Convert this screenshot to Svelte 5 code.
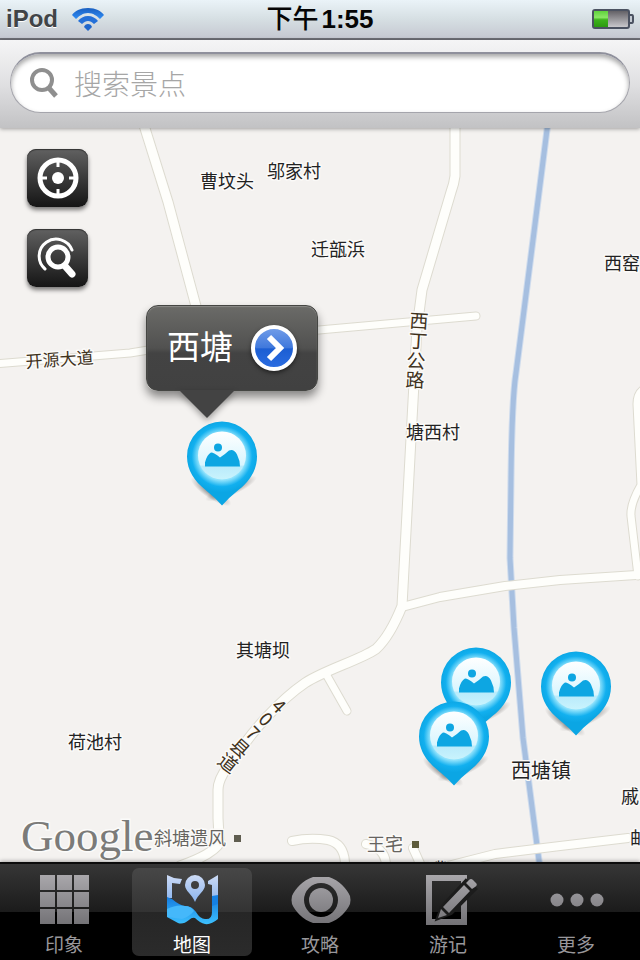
<script>
  const roads = [
    { d: 'M143 -6 L168 74 L197 182', w: 9 },
    { d: 'M-6 236 L130 225 L210 212 L330 201 L476 188', w: 7 },
    { d: 'M455 -6 V48 Q454 56 451 64 L422 162 L417 200 L411 310 L402 478 Q390 508 376 521 C360 532 325 542 305 555 C280 572 250 605 235 630 C224 642 218 652 218 662 V690 Q219 710 220 714 Q214 726 180 738', w: 9 },
    { d: 'M402 479 L440 469 L505 458 L560 452 L650 446', w: 8 },
    { d: 'M326 546 L347 583', w: 7 },
    { d: 'M650 258 Q637 262 637 276 L641 357 Q630 376 631 388 L638 448', w: 7 },
    { d: 'M292 713 Q310 709 328 712 Q346 716 345 740', w: 8 },
    { d: 'M366 716 Q387 720 386 740', w: 8 },
    { d: 'M413 720 L422 740', w: 8 },
    { d: 'M440 740 L495 726 L560 718 L628 710', w: 8 }
  ];

  const places = [
    { name: '曹坟头', x: 200, y: 60 },
    { name: '邬家村', x: 267, y: 50 },
    { name: '迁瓿浜', x: 311, y: 128 },
    { name: '西窑', x: 604, y: 142 },
    { name: '塘西村', x: 406, y: 311 },
    { name: '其塘坝', x: 236, y: 529 },
    { name: '荷池村', x: 68, y: 621 },
    { name: '西塘镇', x: 511, y: 650, size: 'town' },
    { name: '戚', x: 621, y: 675 },
    { name: '邮', x: 630, y: 717 },
    { name: '嘴', x: 429, y: 748 },
    { name: '斜塘遗风', x: 154, y: 717, size: 'poi' },
    { name: '王宅', x: 367, y: 723, size: 'poi' }
  ];

  const roadChars = [
    { c: '西', x: 419, y: 193, r: 4 },
    { c: '丁', x: 418, y: 213, r: 4 },
    { c: '公', x: 416, y: 233, r: 4 },
    { c: '路', x: 415, y: 252, r: 2 },
    { c: '4', x: 279, y: 578, r: 45 },
    { c: '0', x: 266, y: 591, r: 45 },
    { c: '7', x: 253, y: 605, r: 45 },
    { c: '县', x: 240, y: 620, r: 42 },
    { c: '道', x: 228, y: 635, r: 38 }
  ];

  const pins = [
    { name: '西塘', x: 222, y: 378 },
    { name: '景点一', x: 476, y: 604 },
    { name: '景点二', x: 576, y: 608 },
    { name: '景点三', x: 454, y: 658 }
  ];

  const tabs = [
    { id: 'grid', label: '印象' },
    { id: 'map', label: '地图' },
    { id: 'eye', label: '攻略' },
    { id: 'note', label: '游记' },
    { id: 'more', label: '更多' }
  ];

  let active = $state('map');
  let query = $state('');
</script>

<div class="app">
  <header class="status">
    <div class="carrier">
      <span>iPod</span>
      <svg width="34" height="24" viewBox="0 0 34 24" aria-hidden="true">
        <defs>
          <linearGradient id="wifi" x1="0" y1="0" x2="0" y2="1">
            <stop offset="0" stop-color="#1a5fc0" />
            <stop offset="1" stop-color="#2f8df5" />
          </linearGradient>
        </defs>
        <path fill="url(#wifi)" d="M17 1 C25 1 30 4 33 8 L29 12 C26 9 22 6 17 6 C12 6 8 9 5 12 L1 8 C4 4 9 1 17 1Z" />
        <path fill="#2470d8" d="M17 9 C21 9 25 11 27 14 L23 17 C21 15 19 14 17 14 C15 14 13 15 11 17 L7 14 C9 11 13 9 17 9Z" />
        <path fill="#1f66cc" d="M17 17 Q20 17 21 20 L17 24 L13 20 Q14 17 17 17Z" />
      </svg>
    </div>
    <div class="time"><span class="ampm">下午</span>1:55</div>
    <div class="power">
      <svg width="42" height="20" viewBox="0 0 42 20" aria-label="电量">
        <defs>
          <linearGradient id="cell" x1="0" y1="0" x2="0" y2="1">
            <stop offset="0" stop-color="#5d5b60" />
            <stop offset="1" stop-color="#cfced2" />
          </linearGradient>
          <linearGradient id="charge" x1="0" y1="0" x2="0" y2="1">
            <stop offset="0" stop-color="#5fd23c" />
            <stop offset="0.4" stop-color="#8be765" />
            <stop offset="0.55" stop-color="#3cb31b" />
            <stop offset="1" stop-color="#2c9a10" />
          </linearGradient>
        </defs>
        <rect x="1" y="1" width="36" height="18" rx="2" fill="url(#cell)" stroke="#4b5261" stroke-width="2" />
        <rect x="2" y="2" width="14" height="16" fill="url(#charge)" />
        <path d="M38 6 H40 Q41 6 41 8 V12 Q41 14 40 14 H38" fill="#c4cad2" stroke="#4b5261" stroke-width="2" />
      </svg>
    </div>
  </header>

  <div class="searchbar">
    <label class="search">
      <svg width="30" height="32" viewBox="0 0 30 32" aria-hidden="true">
        <circle cx="13" cy="13" r="10" fill="none" stroke="#8f8f8f" stroke-width="4" />
        <path d="M19 20 L27 29" stroke="#8f8f8f" stroke-width="5" />
      </svg>
      <input type="text" placeholder="搜索景点" aria-label="搜索景点" bind:value={query} />
    </label>
  </div>

  <main class="map">
    <svg class="tiles" width="100%" height="100%" aria-label="地图">
      <rect class="land" width="100%" height="100%" />
      <path class="river-edge" d="M548 -6 L533 112 L516 245 Q512 270 511 350 L510 430 L514 500 L523 610 L540 740" />
      <path class="river" d="M548 -6 L533 112 L516 245 Q512 270 511 350 L510 430 L514 500 L523 610 L540 740" />
      {#each roads as road}
        <path class="casing" d={road.d} stroke-width={road.w + 2} />
      {/each}
      {#each roads as road}
        <path class="road" d={road.d} stroke-width={road.w} />
      {/each}
      <text class="google" x="21" y="723">Google</text>
      {#each places as p}
        <text class="place {p.size ?? ''}" x={p.x} y={p.y}>{p.name}</text>
      {/each}
      <text class="place street" x="26" y="240" transform="rotate(-4 26 240)">开源大道</text>
      {#each roadChars as g}
        <text class="place street centered" x={g.x} y={g.y + 7} transform="rotate({g.r} {g.x} {g.y})">{g.c}</text>
      {/each}
      <rect x="234" y="707" width="7" height="7" fill="#5f5d50" />
      <rect x="412" y="713" width="7" height="7" fill="#5f5d3c" />
    </svg>

    <div class="tools">
      <button aria-label="定位">
        <svg width="44" height="44" viewBox="0 0 44 44" fill="none" stroke="#fff">
          <circle cx="22" cy="22" r="18" stroke-width="5" />
          <circle cx="22" cy="22" r="6" fill="#fff" stroke="none" />
          <path d="M22 4 V11 M22 33 V40 M4 22 H11 M33 22 H40" stroke-width="3" />
        </svg>
      </button>
      <button aria-label="附近搜索">
        <svg width="44" height="44" viewBox="0 0 44 44" fill="none" stroke="#fff" stroke-linecap="round">
          <circle cx="22" cy="21" r="10" stroke-width="5" />
          <path d="M29 30 L36 38" stroke-width="7" />
          <path d="M9 33 A17 17 0 1 1 36 14" stroke-width="3" />
        </svg>
      </button>
    </div>

    {#each pins as pin}
      <button class="pin" aria-label={pin.name} style="left: {pin.x}px; top: {pin.y}px">
        <svg width="90" height="90" viewBox="0 0 90 90">
          <defs>
            <linearGradient id="disc" x1="0" y1="0" x2="0" y2="1">
              <stop offset="0" stop-color="#ffffff" />
              <stop offset="0.7" stop-color="#d8f5fe" />
              <stop offset="0.72" stop-color="#b9ebfb" />
              <stop offset="1" stop-color="#c9f3fd" />
            </linearGradient>
            <radialGradient id="halo" gradientUnits="userSpaceOnUse" cx="45" cy="36" r="36">
              <stop offset="0.66" stop-color="#8fe2fc" />
              <stop offset="0.84" stop-color="#12b0ef" />
              <stop offset="1" stop-color="#0ba6e4" />
            </radialGradient>
            <radialGradient id="shade">
              <stop offset="0" stop-color="#000" stop-opacity="0.5" />
              <stop offset="1" stop-color="#000" stop-opacity="0" />
            </radialGradient>
          </defs>
          <ellipse cx="54" cy="68" rx="28" ry="7" fill="url(#shade)" transform="rotate(-24 54 68)" />
          <ellipse cx="34" cy="71" rx="24" ry="7" fill="url(#shade)" transform="rotate(34 34 71)" />
          <path fill="url(#halo)" d="M45 1 A35 35 0 0 1 80 36 C80 50 72 61 62 69 Q52 77 45 85 Q38 77 28 69 C18 61 10 50 10 36 A35 35 0 0 1 45 1Z" />
          <circle cx="45" cy="35" r="24" fill="url(#disc)" />
          <circle cx="41" cy="27" r="4" fill="#0da6e2" />
          <path fill="#0da6e2" d="M28 46 V42 Q30 34 34 32 Q37 32 43 37 Q49 33 52 30 Q57 28 60 34 Q63 40 63 46Z" />
        </svg>
      </button>
    {/each}

    <div class="callout">
      <strong>西塘</strong>
      <button aria-label="详情">
        <svg width="20" height="28" viewBox="0 0 20 28" aria-hidden="true">
          <path d="M3 3 L14 14 L3 25" fill="none" stroke="#fff" stroke-width="6" />
        </svg>
      </button>
      <svg class="tail" width="56" height="30" viewBox="0 0 56 30" aria-hidden="true">
        <path d="M0 0 H56 L28 28Z" fill="#434343" />
      </svg>
    </div>
  </main>

  <nav class="tabs">
    {#each tabs as tab}
      <button class:active={active === tab.id} onclick={() => (active = tab.id)}>
        <svg width="60" height="52" viewBox="0 0 60 52" aria-hidden="true">
          <defs>
            <linearGradient id="metal" gradientUnits="userSpaceOnUse" x1="0" y1="0" x2="0" y2="52">
              <stop offset="0" stop-color="#aaa8ac" />
              <stop offset="1" stop-color="#727175" />
            </linearGradient>
            <linearGradient id="sky" gradientUnits="userSpaceOnUse" x1="0" y1="0" x2="0" y2="36">
              <stop offset="0" stop-color="#cfdcf5" />
              <stop offset="1" stop-color="#77a8ec" />
            </linearGradient>
            <linearGradient id="water" gradientUnits="userSpaceOnUse" x1="0" y1="22" x2="0" y2="52">
              <stop offset="0" stop-color="#1479de" />
              <stop offset="1" stop-color="#3fc4ff" />
            </linearGradient>
          </defs>
          {#if tab.id === 'grid'}
            {#each [0, 1, 2] as row}
              {#each [0, 1, 2] as col}
                <rect x={6 + col * 17} y={1 + row * 17} width="15" height="15" fill="url(#metal)" />
              {/each}
            {/each}
          {:else if tab.id === 'map'}
            <path fill="url(#sky)" d="M5 1 L12 4 L20 5 L18 10 L10 9 V24 L5 24Z" />
            <path fill="url(#sky)" d="M46 7 L51 4 L56 1 V30 L50 32 V11 L46 10Z" />
            <path fill="#1581e4" d="M50 22 L56 21 V40 H50Z" />
            <path fill="url(#water)" d="M5 23 L10 25 Q17 31 23 32 Q30 32 34 38 Q38 45 43 45 Q50 46 50 38 V32 L56 30 V45 Q49 51 43 50 Q38 49 33 44 Q30 43 27 46 Q21 51 16 49 L5 43Z" />
            <path fill="#45b8fa" d="M5 35 Q15 30 23 32 Q29 32 32 37 Q27 43 20 45 L5 43Z" />
            <path fill="url(#sky)" fill-rule="evenodd" d="M33 1 A10 10 0 0 1 43 11 C43 17 36 20 33 28 C30 20 23 17 23 11 A10 10 0 0 1 33 1Z M33 7 A4 4 0 1 0 33 15 A4 4 0 1 0 33 7Z" />
          {:else if tab.id === 'eye'}
            <path fill="url(#metal)" fill-rule="evenodd" d="M23 3 H39 C49 6 57 15 60 22 Q61 26 60 30 C57 37 49 46 39 49 H23 C13 46 5 37 2 30 Q1 26 2 22 C5 15 13 6 23 3Z M31 9 A17 17 0 1 0 31 43 A17 17 0 1 0 31 9Z" />
            <circle cx="31" cy="26" r="12" fill="url(#metal)" />
          {:else if tab.id === 'note'}
            <path fill="url(#metal)" fill-rule="evenodd" d="M8 1 H49 V51 H8Z M14 7 V45 H43 V7Z" />
            <path d="M20 44 L24 33 L48 7 L57 15 L33 39Z" fill="#1c1c1c" stroke="#1c1c1c" stroke-width="4" />
            <path fill="url(#metal)" d="M20 44 L23 35 L29 41Z M25 33 L46 11 L52 17 L31 39Z M48 9 L51 6 Q53 4 55 6 L58 9 Q60 11 57 13 L54 15Z" />
          {:else}
            <g fill="url(#metal)">
              <circle cx="11" cy="26" r="6.5" /><circle cx="31" cy="26" r="6.5" /><circle cx="51" cy="26" r="6.5" />
            </g>
          {/if}
        </svg>
        <span>{tab.label}</span>
      </button>
    {/each}
  </nav>
</div>

<style>
  :global(body) {
    margin: 0;
    background: #000;
  }
  .app {
    display: flex;
    flex-direction: column;
    height: 100vh;
    min-height: 480px;
    font-family: 'Liberation Sans', 'Noto Sans CJK SC', sans-serif;
  }
  button {
    border: 0;
    margin: 0;
    padding: 0;
    font: inherit;
    cursor: pointer;
  }
  svg {
    display: block;
    flex-shrink: 0;
    overflow: visible;
  }

  .status {
    display: grid;
    grid-template-columns: 1fr auto 1fr;
    align-items: center;
    box-sizing: border-box;
    height: 40px;
    padding: 0 6px;
    background: linear-gradient(#eaf3f8, #d6dfe3 50%, #c5c8d1);
    border-bottom: 2px solid #6e6f76;
    font-weight: 700;
  }
  .carrier {
    display: flex;
    align-items: center;
    gap: 13px;
    font-size: 24px;
    color: #414447;
    text-shadow: 0 1px 0 #fff;
  }
  .time {
    font-size: 26px;
    line-height: 38px;
    color: #050505;
  }
  .ampm {
    margin-right: 3px;
    font-weight: 500;
  }
  .power {
    display: flex;
    justify-content: flex-end;
  }

  .searchbar {
    position: relative;
    z-index: 2;
    padding: 12px 10px 15px;
    background: linear-gradient(#f5f5f6, #e0e0e2 50%, #c2c2c4);
    box-shadow: 0 1px 4px rgba(0, 0, 0, 0.35);
  }
  .search {
    display: flex;
    align-items: center;
    gap: 15px;
    box-sizing: border-box;
    height: 61px;
    padding: 0 20px 0 18px;
    border: 1px solid #a5a5ac;
    border-top: 2px solid #8f909c;
    border-radius: 31px;
    background: #fff;
    box-shadow: inset 0 3px 5px rgba(0, 0, 0, 0.35);
  }
  .search input {
    flex: 1;
    min-width: 0;
    border: 0;
    padding: 0;
    outline: 0;
    background: none;
    font: 300 28px/40px 'Noto Sans CJK SC', sans-serif;
    color: #333;
  }
  .search input::placeholder {
    color: #a6a6a6;
    opacity: 1;
  }

  .map {
    position: relative;
    flex: 1;
    min-height: 0;
    overflow: hidden;
  }
  .tiles {
    position: absolute;
    inset: 0;
  }
  .land {
    fill: #f4f2f0;
  }
  .river-edge,
  .river,
  .casing,
  .road {
    fill: none;
    stroke-linecap: round;
    stroke-linejoin: round;
  }
  .river-edge {
    stroke: #cfdced;
    stroke-width: 7;
  }
  .river {
    stroke: #a6bfe0;
    stroke-width: 5;
  }
  .casing {
    stroke: #dddbd0;
  }
  .road {
    stroke: #fefefb;
  }
  .place {
    font: 18px 'Noto Sans CJK SC', sans-serif;
    fill: #222;
    stroke: #fbfaf8;
    stroke-width: 3px;
    stroke-linejoin: round;
    paint-order: stroke;
  }
  .town {
    font-size: 20px;
  }
  .poi {
    fill: #66645f;
  }
  .street {
    font-size: 17px;
    fill: #40321c;
  }
  .centered {
    font-size: 19px;
    text-anchor: middle;
  }
  .google {
    font: 45px 'Liberation Serif', serif;
    fill: #7b7b79;
    stroke: #fbfbfa;
    stroke-width: 3px;
    paint-order: stroke;
  }

  .tools {
    position: absolute;
    left: 27px;
    top: 21px;
    display: flex;
    flex-direction: column;
    gap: 22px;
  }
  .tools button {
    display: grid;
    place-items: center;
    width: 61px;
    height: 58px;
    border-radius: 9px;
    background: linear-gradient(#616161, #3a3a3a 50%, #151515);
    box-shadow: 0 3px 4px rgba(0, 0, 0, 0.5), inset 0 1px 1px #333;
  }

  .pin {
    position: absolute;
    transform: translate(-50%, -95%);
    background: none;
  }

  .callout {
    position: absolute;
    left: 146px;
    top: 177px;
    display: flex;
    align-items: center;
    gap: 18px;
    box-sizing: border-box;
    height: 86px;
    padding: 0 20px;
    border: 1px solid #454643;
    border-radius: 12px;
    background: linear-gradient(#6b6b68, #515150 50%, #434343 56%, #414141);
    box-shadow: 0 6px 10px rgba(0, 0, 0, 0.45), inset 0 1px 1px #8b8b88;
    color: #fff;
  }
  .callout strong {
    padding-bottom: 6px;
    font: 33px/48px 'Noto Sans CJK SC', sans-serif;
  }
  .callout button {
    display: grid;
    place-items: center;
    box-sizing: border-box;
    width: 46px;
    height: 46px;
    padding-left: 3px;
    border: 4px solid #fff;
    border-radius: 50%;
    background: linear-gradient(#6f9be8, #3f78dc 50%, #1c5ed3 52%, #2a6ce0);
    box-shadow: 0 2px 4px rgba(0, 0, 0, 0.5);
  }
  .tail {
    position: absolute;
    left: 32px;
    top: 84px;
    filter: drop-shadow(0 3px 3px rgba(0, 0, 0, 0.35));
  }

  .tabs {
    position: relative;
    display: flex;
    box-sizing: border-box;
    height: 98px;
    padding: 4px 0;
    border-top: 2px solid #0c0c0c;
    background: linear-gradient(#363636, #1b1b1b 48px, #000 48px);
    box-shadow: 0 -1px 4px rgba(0, 0, 0, 0.3);
  }
  .tabs button {
    flex: 1;
    display: flex;
    flex-direction: column;
    align-items: center;
    gap: 6px;
    margin: 0 4px;
    padding-top: 6px;
    border-radius: 7px;
    background: none;
    color: #98979b;
    font: 19px/24px 'Noto Sans CJK SC', sans-serif;
  }
  .tabs button.active {
    background: linear-gradient(#474747, #333 44px, #262626 44px, #2b2b2b);
    color: #fff;
  }
</style>
